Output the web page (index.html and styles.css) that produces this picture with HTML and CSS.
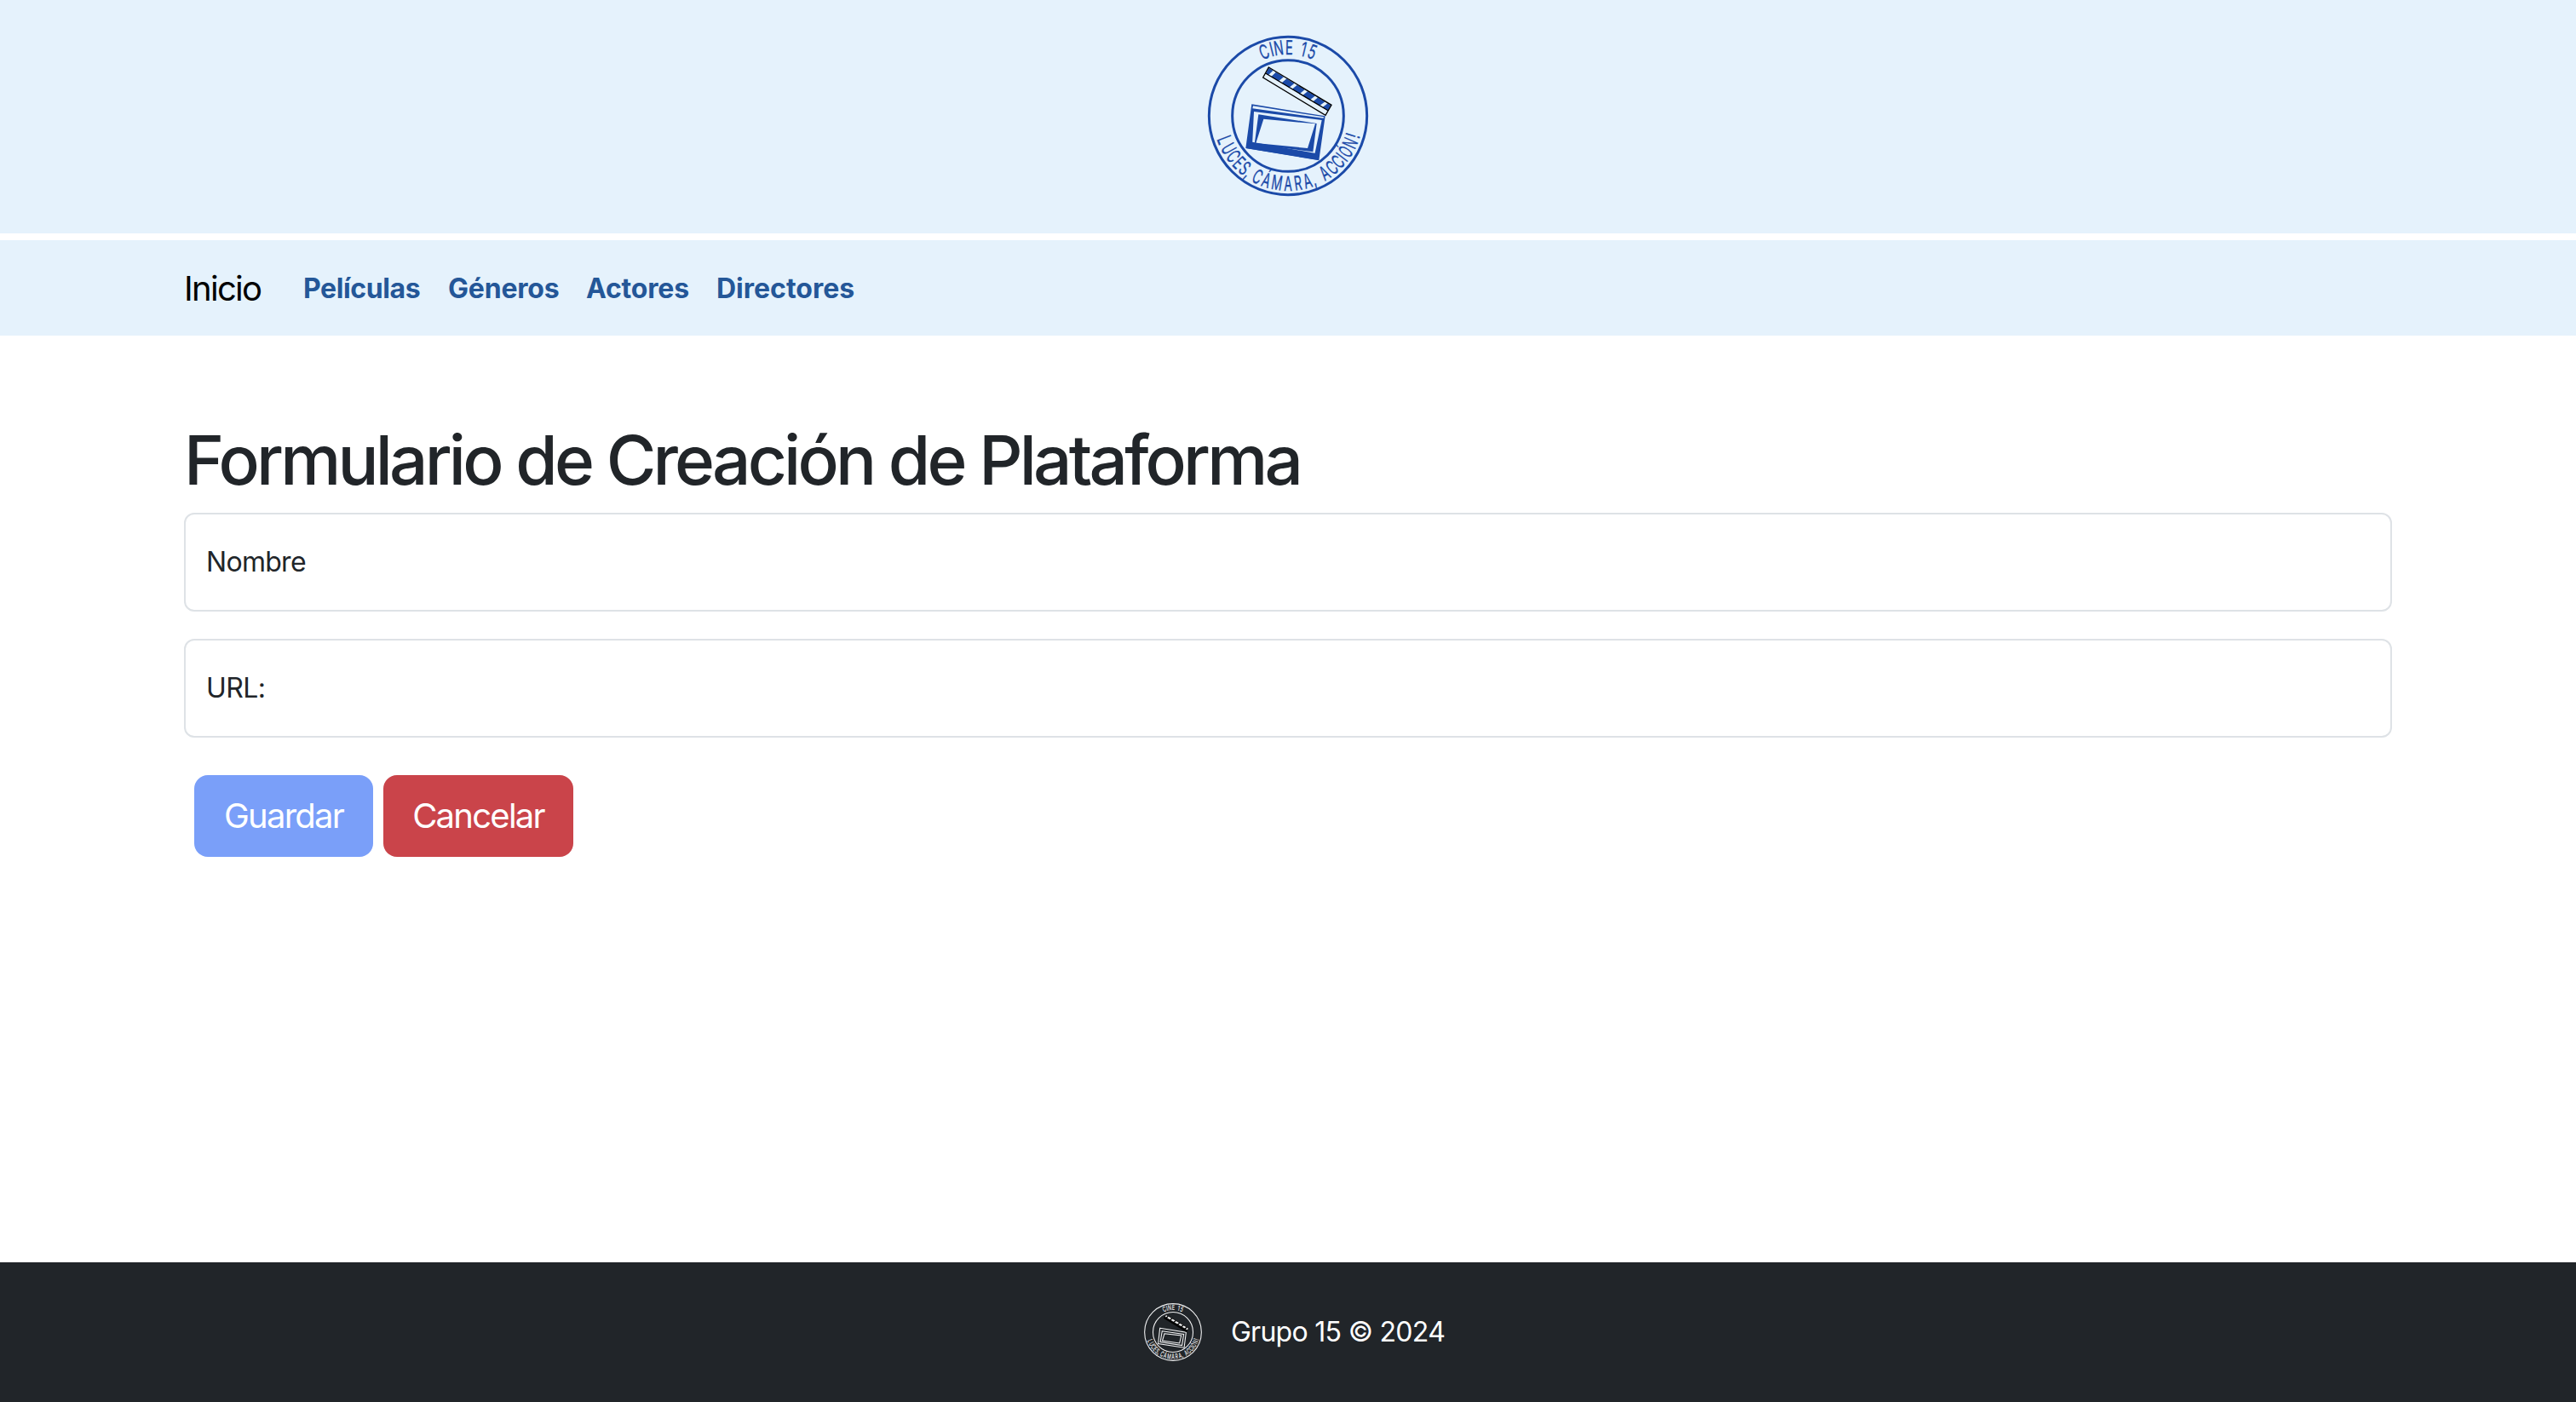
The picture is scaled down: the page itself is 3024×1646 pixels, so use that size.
FILE: index.html
```html
<!DOCTYPE html>
<html lang="es">
<head>
<meta charset="utf-8">
<title>Cine 15</title>
<link rel="stylesheet" href="styles.css">
</head>
<body>
<header class="banner">
  <svg class="logo" viewBox="36 18 600 600" role="img" aria-label="Cine 15">
    <path class="ink" fill-rule="evenodd" d="M208 277 467 319 445 475 187 432ZM213 283 211 292 461 326 462 322ZM216 303 210 423 430 454 455 333Z"/>
    <path class="ink" d="M210 410 188 432 445 474 433 450Z"/>
    <path class="ink" fill-rule="evenodd" d="M232 313 437 345 424 445 218 418ZM250 329 223 414 405 432 432 346Z"/>
    <g id="emblem">
      <circle class="ring" cx="336" cy="318" r="278"/>
      <circle class="ring" cx="336" cy="318" r="196"/>
      <path class="stick" d="M268 147 489 280 468 316 248 183Z"/>
      <path class="ink" d="M268 149 487 281 477 300 258 169Z"/>
      <path class="stripe" d="M289 161 270 179M327 183 306 201M364 206 343 223M401 228 380 245M437 250 416 267M471 271 450 287"/>
      <path class="edge" d="M268 147 489 280 468 316 248 183ZM257 168 478 300"/>
      <g class="letters">
        <text transform="rotate(-20.5 336 318) translate(336 102) scale(.64 1)">C</text>
        <text transform="rotate(-14 336 318) translate(336 102) scale(.64 1)">I</text>
        <text transform="rotate(-8 336 318) translate(336 102) scale(.64 1)">N</text>
        <text transform="rotate(.9 336 318) translate(336 102) scale(.64 1)">E</text>
        <text transform="rotate(13.3 336 318) translate(336 102) scale(.64 1)">1</text>
        <text transform="rotate(20.8 336 318) translate(336 102) scale(.64 1)">5</text>
        <text transform="rotate(69.2 336 318) translate(336 582) scale(.64 1)">L</text>
        <text transform="rotate(61 336 318) translate(336 582) scale(.6 1)">U</text>
        <text transform="rotate(53.5 336 318) translate(336 582) scale(.6 1)">C</text>
        <text transform="rotate(46.2 336 318) translate(336 582) scale(.6 1)">E</text>
        <text transform="rotate(39.6 336 318) translate(336 582) scale(.6 1)">S</text>
        <text transform="rotate(35 336 318) translate(336 582) scale(.64 1)">,</text>
        <text transform="rotate(26.6 336 318) translate(336 582) scale(.6 1)">C</text>
        <text transform="rotate(18.5 336 318) translate(336 582) scale(.6 1)">Á</text>
        <text transform="rotate(9.3 336 318) translate(336 582) scale(.6 1)">M</text>
        <text transform="rotate(0 336 318) translate(336 582) scale(.6 1)">A</text>
        <text transform="rotate(-8.5 336 318) translate(336 582) scale(.6 1)">R</text>
        <text transform="rotate(-16.6 336 318) translate(336 582) scale(.6 1)">A</text>
        <text transform="rotate(-21.8 336 318) translate(336 582) scale(.64 1)">,</text>
        <text transform="rotate(-32.5 336 318) translate(336 582) scale(.6 1)">A</text>
        <text transform="rotate(-40.2 336 318) translate(336 582) scale(.6 1)">C</text>
        <text transform="rotate(-47.4 336 318) translate(336 582) scale(.6 1)">C</text>
        <text transform="rotate(-52.6 336 318) translate(336 582) scale(.6 1)">I</text>
        <text transform="rotate(-58.2 336 318) translate(336 582) scale(.54 1)">Ó</text>
        <text transform="rotate(-66.4 336 318) translate(336 582) scale(.58 1)">N</text>
        <text transform="rotate(-73 336 318) translate(336 582) scale(.64 1)">!</text>
      </g>
    </g>
  </svg>
</header>
<nav class="navbar">
  <a class="brand">Inicio</a>
  <a class="link peliculas">Películas</a>
  <a class="link generos">Géneros</a>
  <a class="link actores">Actores</a>
  <a class="link directores">Directores</a>
</nav>
<main class="content">
  <h1 class="title">Formulario de Creación de Plataforma</h1>
  <form class="form">
    <label class="field"><span class="nombre">Nombre</span></label>
    <label class="field"><span class="url">URL:</span></label>
    <div class="actions">
      <button class="btn save" type="button" disabled>Guardar</button>
      <button class="btn cancel" type="button">Cancelar</button>
    </div>
  </form>
</main>
<footer class="footer">
  <svg class="logo-small" viewBox="36 18 600 600" aria-hidden="true">
    <path class="frame" d="M208 279 464 320 445 470 191 430ZM230 307 441 339 424 448 212 415Z"/>
    <path class="frame inner" d="M253 332 417 352 400 426 232 402Z"/>
    <use href="#emblem"/>
  </svg>
  <span class="credit">Grupo 15 © 2024</span>
</footer>
</body>
</html>
```
FILE: styles.css
```css
* { box-sizing: border-box; }
body {
  margin: 0;
  min-height: 100vh;
  display: flex;
  flex-direction: column;
  font-family: Inter, "Liberation Sans", sans-serif;
  font-size: 32px;
  line-height: 48px;
  color: #212529;
  background: #fff;
}
.banner {
  --ink: #1b4aa8;
  --paper: #e5f2fc;
  --edge: #000;
  --ring: 9px;
  height: 274px;
  padding-top: 36px;
  display: flex;
  justify-content: center;
  background: #e5f2fc;
}
.logo { width: 200px; height: 200px; }
.ring { fill: none; stroke: var(--ink); stroke-width: var(--ring); }
.ink { fill: var(--ink); }
.stick { fill: var(--paper); }
.stripe { fill: none; stroke: var(--stripe, #e5f2fc); stroke-width: 11px; }
.edge { fill: none; stroke: var(--edge); stroke-width: 4px; }
.letters {
  fill: var(--ink);
  stroke: var(--ink);
  stroke-width: 1px;
  font-size: 70px;
  text-anchor: middle;
}
.navbar {
  margin-top: 8px;
  height: 112px;
  padding: 2px 216px 0;
  display: flex;
  align-items: center;
  background: #e5f2fc;
}
.brand { width: 140px; font-size: 40px; letter-spacing: -1.7px; color: #000; }
.link { font-weight: 700; letter-spacing: -.2px; color: #245798; }
.peliculas { width: 170px; letter-spacing: -.4px; }
.generos { width: 162px; }
.actores { width: 153px; }
.directores { letter-spacing: 0; }
.content { flex: 1; padding: 98px 216px 0; }
.title {
  margin: 0 0 14px;
  font-size: 80px;
  line-height: 96px;
  font-weight: 500;
  letter-spacing: -3.8px;
}
.field {
  display: flex;
  align-items: center;
  height: 116px;
  margin-bottom: 32px;
  padding: 0 24px;
  border: 2px solid #dee2e6;
  border-radius: 12px;
}
.nombre { letter-spacing: -.7px; }
.url { letter-spacing: -.6px; }
.actions { display: flex; gap: 12px; padding: 12px 12px 0; }
.btn {
  height: 96px;
  padding: 0;
  border: 0;
  border-radius: 16px;
  font: 400 40px/60px Inter, "Liberation Sans", sans-serif;
  letter-spacing: -1.75px;
  color: #fff;
}
.save { width: 210px; background: #7a9ff9; }
.cancel { width: 223px; background: #ca444a; }
.footer {
  --ink: #f1f2f3;
  --paper: #000;
  --edge: #000;
  --stripe: #000;
  --ring: 9px;
  height: 164px;
  padding-left: 13px;
  display: flex;
  justify-content: center;
  align-items: center;
  gap: 32px;
  background: #212529;
  color: #fff;
}
.logo-small { width: 72px; height: 72px; }
.frame { fill: none; stroke: var(--ink); stroke-width: 9px; }
.frame.inner { fill: #212529; }
.credit { letter-spacing: -.7px; }
```
